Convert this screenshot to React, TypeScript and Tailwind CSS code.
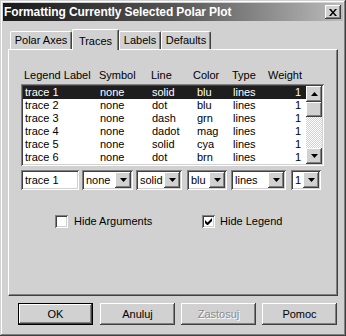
import React from "react";

const FONT = { fontFamily: '"Liberation Sans", Arial, sans-serif' };

const raised =
  "bg-[#d1d1d1] shadow-[inset_-1px_-1px_#404040,inset_1px_1px_#ffffff,inset_-2px_-2px_#808080]";
const sunken =
  "shadow-[inset_1px_1px_#808080,inset_-1px_-1px_#ffffff,inset_2px_2px_#404040,inset_-2px_-2px_#d1d1d1]";

function Tri({ up = false }: { up?: boolean }) {
  return (
    <svg width="7" height="4" viewBox="0 0 7 4" className={up ? "rotate-180" : ""}>
      <path d="M0 0h7L3.5 4z" fill="#000" />
    </svg>
  );
}

function DropBtn() {
  return (
    <div className={`w-[16px] h-full flex items-center justify-center ${raised}`}>
      <Tri />
    </div>
  );
}

function Combo({ w, text, ml }: { w: string; text: string; ml: string }) {
  return (
    <div className={`${w} ${ml} h-[20px] bg-white ${sunken} p-[2px] flex items-stretch`}>
      <div className="flex-1 pl-[2px] text-[11px] leading-[16px]">{text}</div>
      <DropBtn />
    </div>
  );
}

const rows = [
  ["trace 1", "none", "solid", "blu", "lines", "1"],
  ["trace 2", "none", "dot", "blu", "lines", "1"],
  ["trace 3", "none", "dash", "grn", "lines", "1"],
  ["trace 4", "none", "dadot", "mag", "lines", "1"],
  ["trace 5", "none", "solid", "cya", "lines", "1"],
  ["trace 6", "none", "dot", "brn", "lines", "1"],
];

function Button({ label, ml, def, disabled }: { label: string; ml: string; def?: boolean; disabled?: boolean }) {
  if (def) {
    return (
      <div className={`${ml} w-[75px] h-[22px] border border-black`}>
        <div className={`w-full h-full flex items-center justify-center text-[11px] ${raised}`}>{label}</div>
      </div>
    );
  }
  return (
    <div
      className={`${ml} w-[75px] h-[22px] flex items-center justify-center text-[11px] ${raised} ${
        disabled ? "text-[#8c8c8c] [text-shadow:1px_1px_#ffffff]" : ""
      }`}
    >
      {label}
    </div>
  );
}

export default function App() {
  return (
    <div
      style={FONT}
      className="w-[346px] h-[336px] bg-[#d1d1d1] p-[3px] flex flex-col text-black shadow-[inset_-1px_-1px_#404040,inset_1px_1px_#d1d1d1,inset_-2px_-2px_#808080,inset_2px_2px_#ffffff]"
    >
      {/* title bar */}
      <div className="h-[18px] flex items-center justify-between bg-gradient-to-r from-[#1a1a1a] via-[#555555] to-[#bcbcbc] pl-[1px] pr-[2px]">
        <span className="text-white font-bold text-[12px] leading-[18px] tracking-[-0.1px]">
          Formatting Currently Selected Polar Plot
        </span>
        <div className={`w-[16px] h-[14px] flex items-center justify-center ${raised}`}>
          <svg width="8" height="7" viewBox="0 0 8 7">
            <path d="M0 0h2l2 2.5L6 0h2L5 3.5 8 7H6L4 4.5 2 7H0l3-3.5z" fill="#000" />
          </svg>
        </div>
      </div>

      {/* tabs */}
      <div className="mt-[8px] mx-[5px] flex flex-col">
        <div className="h-[20px] flex items-end pl-[2px] relative z-10">
          <div className="w-[62px] h-[18px] border-t border-l border-white border-r border-r-[#404040] rounded-t-[2px] shadow-[inset_-1px_0_#808080] flex items-center justify-center text-[11px]">
            Polar Axes
          </div>
          <div className="w-[47px] h-[21px] -mb-px bg-[#d1d1d1] border-t border-l border-white border-r border-r-[#404040] rounded-t-[2px] shadow-[inset_-1px_0_#808080] flex items-start pt-[3px] justify-center text-[11px]">
            Traces
          </div>
          <div className="w-[42px] h-[18px] border-t border-l border-white border-r border-r-[#404040] rounded-t-[2px] shadow-[inset_-1px_0_#808080] flex items-center justify-center text-[11px]">
            Labels
          </div>
          <div className="w-[50px] h-[18px] border-t border-l border-white border-r border-r-[#404040] rounded-t-[2px] shadow-[inset_-1px_0_#808080] flex items-center justify-center text-[11px]">
            Defaults
          </div>
        </div>

        {/* panel */}
        <div className="h-[247px] border border-t-white border-l-white border-r-[#404040] border-b-[#404040] shadow-[inset_-1px_-1px_#808080] flex flex-col">
          {/* headers */}
          <div className="mt-[19px] h-[13px] flex text-[11px] leading-[13px] pl-[15px]">
            <div className="w-[75px]">Legend Label</div>
            <div className="w-[52px]">Symbol</div>
            <div className="w-[42px]">Line</div>
            <div className="w-[39px]">Color</div>
            <div className="w-[36px]">Type</div>
            <div>Weight</div>
          </div>

          {/* list */}
          <div className={`mt-[2px] ml-[12px] w-[303px] h-[82px] bg-white p-[2px] flex ${sunken}`}>
            <div className="flex-1 flex flex-col">
              {rows.map((r, i) => (
                <div
                  key={i}
                  className={`h-[13px] flex text-[11px] leading-[13px] pl-[2px] ${
                    i === 0 ? "bg-[#1e1e1e] text-white" : ""
                  }`}
                >
                  <div className="w-[75px]">{r[0]}</div>
                  <div className="w-[52px]">{r[1]}</div>
                  <div className="w-[45px]">{r[2]}</div>
                  <div className="w-[36px]">{r[3]}</div>
                  <div className="w-[38px]">{r[4]}</div>
                  <div className="w-[30px] text-right">{r[5]}</div>
                </div>
              ))}
            </div>
            <div className="w-[16px] flex flex-col">
              <div className={`h-[16px] flex items-center justify-center ${raised}`}>
                <Tri up />
              </div>
              <div className={`h-[15px] ${raised}`} />
              <div className="flex-1 bg-[repeating-conic-gradient(#ffffff_0_25%,#d1d1d1_0_50%)] bg-[length:2px_2px]" />
              <div className={`h-[16px] flex items-center justify-center ${raised}`}>
                <Tri />
              </div>
            </div>
          </div>

          {/* edit row */}
          <div className="mt-[4px] ml-[12px] flex">
            <div className={`w-[58px] h-[20px] bg-white ${sunken} p-[2px] pl-[4px] text-[11px] leading-[16px]`}>
              trace 1
            </div>
            <Combo w="w-[51px]" ml="ml-[3px]" text="none" />
            <Combo w="w-[46px]" ml="ml-[3px]" text="solid" />
            <Combo w="w-[40px]" ml="ml-[5px]" text="blu" />
            <Combo w="w-[55px]" ml="ml-[4px]" text="lines" />
            <Combo w="w-[30px]" ml="ml-[5px]" text="1" />
          </div>

          {/* checkboxes */}
          <div className="mt-[25px] ml-[46px] flex h-[13px] text-[11px] leading-[13px]">
            <div className="w-[147px] flex items-center">
              <div className={`w-[13px] h-[13px] bg-white ${sunken}`} />
              <span className="ml-[6px]">Hide Arguments</span>
            </div>
            <div className="flex items-center">
              <div className={`w-[13px] h-[13px] bg-white ${sunken} flex items-center justify-center`}>
                <svg width="7" height="7" viewBox="0 0 7 7">
                  <path d="M0 2v3l2 2h1l4-4V0L2.5 4.5z" fill="#000" />
                </svg>
              </div>
              <span className="ml-[5px]">Hide Legend</span>
            </div>
          </div>
        </div>
      </div>

      {/* buttons */}
      <div className="mt-[7px] flex">
        <Button label="OK" ml="ml-[15px]" def />
        <Button label="Anuluj" ml="ml-[7px]" />
        <Button label="Zastosuj" ml="ml-[6px]" disabled />
        <Button label="Pomoc" ml="ml-[6px]" />
      </div>
    </div>
  );
}
